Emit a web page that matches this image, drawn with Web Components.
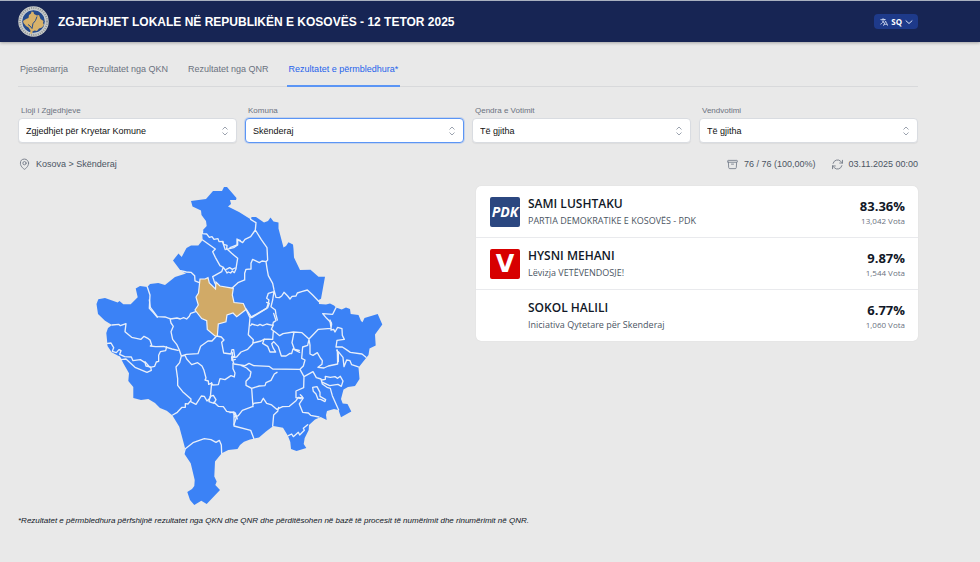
<!DOCTYPE html>
<html lang="sq">
<head>
<meta charset="utf-8">
<meta name="viewport" content="width=device-width, initial-scale=1">
<title>Zgjedhjet Lokale</title>
<style>
  body { margin: 0; background: #e9e9e9; font-family: "Liberation Sans", Arial, sans-serif; font-size: 10px; color: #111827; }
</style>
</head>
<body>
<results-page></results-page>
<script>
const define = (name, html, setup) => {
  const template = document.createElement('template');
  template.innerHTML = `<style>*{box-sizing:border-box}svg{display:block;flex:none}</style>` + html;
  customElements.define(name, class extends HTMLElement {
    constructor() {
      super();
      this.attachShadow({ mode: 'open' }).append(template.content.cloneNode(true));
    }
    connectedCallback() { if (setup) setup(this, this.shadowRoot); }
  });
};

define('state-seal', `
<style>:host{display:block;width:31px;height:31px}svg{width:100%;height:100%}</style>
<svg viewBox="0 0 62 62" aria-hidden="true">
  <circle cx="31" cy="31" r="30.500" fill="#c9cbc9"/>
  <circle cx="31" cy="31" r="27" fill="none" stroke="#8f9496" stroke-width="4" stroke-dasharray="2 2.500"/>
  <circle cx="31" cy="31" r="23.500" fill="#244a8c" stroke="#e3e4e0" stroke-width="1.500"/>
  <path d="M27 11l4 1 1 4 6 3 4-1 3 8 6 4-1 4 2 4-4 5-6 2-4 5-5-1-4 2-1 5-4-1 1-6-4-6-5-3-5-6-1-4 6-4 5-2 1-6 4-3z" fill="#d8b26a"/>
  <path d="M38 21l-3 8-5 6-2 10-4-5-4-3" fill="none" stroke="#244a8c" stroke-width="2"/>
</svg>`);

define('language-menu', `
<style>
:host{display:block}
button{display:flex;align-items:center;gap:3px;height:15px;padding:0 5px 0 6px;border:0;border-radius:4px;background:#1e3a8a;color:#fff;font:bold 8px/15px "Open Sans","Noto Sans",sans-serif}
svg{fill:none;stroke:#dbe4f5;stroke-linecap:round;stroke-linejoin:round}
</style>
<button type="button" aria-haspopup="menu">
<svg width="8" height="8" viewBox="1 2 21 20" stroke-width="2"><path d="m10.500 21 5.250-11.250L21 21m-9-3h7.500M3 5.621a48.474 48.474 0 0 1 6-.371m0 0c1.120 0 2.233.038 3.334.114M9 5.250V3m3.334 2.364C11.176 10.658 7.690 15.080 3 17.502m9.334-12.138c.896.061 1.785.147 2.666.257m-4.589 8.495a18.023 18.023 0 0 1-3.827-5.802"/></svg>
<span>SQ</span>
<svg width="8" height="8" viewBox="0 0 8 8" stroke-width="1"><path d="M1 2.800 4 5.500l3-2.700"/></svg>
</button>`);

define('site-header', `
<style>
:host{display:flex;align-items:center;gap:9px;height:42px;padding:0 62px 0 18px;background:#172554;border-top:1px solid #a9b1c0;box-shadow:0 1px 3px #0000004d}
h1{margin:0;flex:1;font-size:12px;line-height:18px;font-weight:700;color:#fff}
</style>
<state-seal></state-seal><h1><slot></slot></h1><language-menu></language-menu>`);

define('tab-link', `
<style>
:host{display:block}
a{display:block;padding:0 2px 9px;border-bottom:2px solid transparent;color:#6b7280;text-decoration:none;font-size:9px;line-height:14px;white-space:nowrap}
:host([active]) a{color:#2563eb;border-color:#5b95f5}
</style><a href="#"><slot></slot></a>`);

define('tab-bar', `
<style>:host{display:block;border-bottom:1px solid #d8d9db}nav{display:flex;gap:16px;margin-bottom:-1px}</style>
<nav><slot></slot></nav>`);

define('filter-select', `
<style>
:host{display:block;min-width:0}
label{display:block;padding:0 3px;font-size:8px;line-height:12px;color:#6b7280}
.box{display:grid;align-items:center;margin-top:1px}
select{grid-area:1/1;appearance:none;width:100%;height:25px;padding:0 7px;border:1px solid #d9dce1;border-radius:4px;background:#fff;color:#111;font:9px "Liberation Sans",Arial,sans-serif;box-shadow:0 1px 1px #0000000d;outline:0}
:host([active]) select{border-color:#5b95f5;box-shadow:0 0 0 1px #5b95f540}
svg{grid-area:1/1;justify-self:end;margin-right:8px;pointer-events:none;fill:none;stroke:#9ca3af;stroke-width:1}
</style>
<label for="field"></label>
<div class="box"><select id="field"><option></option></select>
<svg width="8" height="10" viewBox="0 0 8 10"><path d="M1.500 3.500 4 1l2.500 2.500M1.500 6.500 4 9l2.500-2.500"/></svg></div>`,
(el, root) => {
  root.querySelector('label').textContent = el.getAttribute('label');
  root.querySelector('option').textContent = el.getAttribute('value');
});

define('status-bar', `
<style>
:host{display:flex;align-items:center;gap:16px;font-size:9px;line-height:14px;color:#4b5563}
span{display:flex;align-items:center;gap:6px}
.place{margin-right:auto;padding-left:1px}
svg{fill:none;stroke:#7b828e;stroke-width:1.800;stroke-linecap:round;stroke-linejoin:round}
</style>
<span class="place"><svg width="11" height="12" viewBox="3 1 18 22"><path d="M15 10.500a3 3 0 1 1-6 0 3 3 0 0 1 6 0Z"/><path d="M19.500 10.500c0 7.142-7.500 11.250-7.500 11.250S4.500 17.642 4.500 10.500a7.500 7.500 0 1 1 15 0Z"/></svg>Kosova &gt; Skënderaj</span>
<span><svg width="11" height="11" viewBox="1 2 22 20"><path d="m20.250 7.500-.625 10.632a2.250 2.250 0 0 1-2.247 2.118H6.622a2.250 2.250 0 0 1-2.247-2.118L3.750 7.500M10 11.250h4M3.375 7.500h17.250c.621 0 1.125-.504 1.125-1.125v-1.500c0-.621-.504-1.125-1.125-1.125H3.375c-.621 0-1.125.504-1.125 1.125v1.500c0 .621.504 1.125 1.125 1.125Z"/></svg>76 / 76 (100,00%)</span>
<span><svg width="11" height="11" viewBox="2 2 20 20"><path d="M16.023 9.348h4.992v-.001M2.985 19.644v-4.992m0 0h4.992m-4.993 0 3.181 3.183a8.250 8.250 0 0 0 13.803-3.700M4.031 9.865a8.250 8.250 0 0 1 13.803-3.700l3.181 3.182m0-4.991v4.990"/></svg>03.11.2025 00:00</span>`);

define('candidate-row', `
<style>
:host{display:flex;align-items:center;gap:8px;height:52px;padding:0 13px 0 14px;border-bottom:1px solid #e9eaed;font-family:"Open Sans","Noto Sans",sans-serif}
:host(:last-child){height:51px;border-bottom:0}
.logo{width:30px;height:30px}
.who{flex:1}
.score{padding-top:2px;text-align:right}
h2,p,strong{display:block;margin:0}
h2{font-size:12px;line-height:18px;font-weight:600;color:#111827}
strong{font-size:13px;line-height:16px;font-weight:700;color:#111827}
.party{font-size:9px;line-height:16px;font-weight:500;color:#4b5563}
.votes{font-size:8px;line-height:13px;color:#6b7280}
</style>
<div class="logo"><slot name="logo"></slot></div>
<div class="who"><h2></h2><p class="party"></p></div>
<div class="score"><strong></strong><p class="votes"></p></div>`,
(el, root) => {
  for (const [sel, key] of [['h2', 'name'], ['.party', 'party'], ['strong', 'share'], ['.votes', 'votes']])
    root.querySelector(sel).textContent = el.getAttribute(key);
});

define('party-logo', `
<style>
:host{display:grid;place-items:center;height:30px;border-radius:2px;background:var(--logo);color:#fff;font:italic 700 14px/30px "Open Sans",sans-serif}
:host([mark]){font:normal 700 24px/30px "DejaVu Sans",sans-serif}
</style><span><slot></slot></span>`);

define('results-list', `
<style>:host{display:block;background:#fff;border-radius:5px;overflow:hidden;box-shadow:0 0 1px #0002}</style><slot></slot>`);

define('municipality-map', `
<style>:host{display:block}svg{width:100%;max-width:300px;height:auto}
.land{fill:#3b82f6}.chosen{fill:#d1aa67;stroke:#eef2f8;stroke-width:1.200}
.lines{fill:none;stroke:#e8effa;stroke-width:4;stroke-linejoin:round;stroke-linecap:round}</style>
<svg viewBox="90 180 300 330" role="img" aria-label="Harta e komunave">
<path class="land" d="M191 201L206 199 213 191 222 191 224 187 227 187 236.500 198 236 200 230 200 231 204 228 206.500 239 212 251 219.500 251.500 217 256 217 264 222.500 268 221 270.500 217.500 273.500 221.500 278.500 222.500 278.500 228.500 283.500 247.500 286 246 288.500 242.300 293 244.500 293.500 249 294 257.500 300 270 310.500 269.700 318.500 276.700 325 276.700 321 298.700 318.700 300 319 304 326 304.500 330 303.500 334 305.500 336 307.500 341.700 309.500 346 307.500 350 309 350.700 314 358.500 315 361 321 362.500 322.300 364.500 318 377.700 314 382.300 324.500 375 334.500 375.700 345.500 369.500 348.500 368.500 355 358.500 367.500 359.500 379 355 386 348 387 343.500 389.500 341 399 342.700 403.500 347.500 404 351.300 411.500 341 417.300 338.500 410 334 409 327 411 326 415 326.700 420 320.700 417 315 419.500 309 425 308.700 430 304.700 438 303.700 444 306.300 448 301.500 449.500 296.500 451 291 449 290.300 442 288 436 283 427.700 273.300 426 266 431.500 259 437.500 250 439.500 244 441.700 240 445 237.500 449 228.300 450 221.700 453.300 215 461.500 214.300 476.500 216.700 481.500 215.300 485 220 490 206.700 504 201.300 500.700 194.300 505 190 500 187.300 492 192 489 194.300 486 194.700 480 190.700 463.300 184 453.300 185 448 179.300 426.700 172.300 415.300 166.700 410.700 160 408 155 403 148.300 399 141 400 133.300 398 133.300 387 128.300 381 129 373.300 123.300 363.300 120 356.700 111.700 352.300 107.500 346 107 340 106.300 333 108 328 112 325 105 320.700 98 314 96.500 304 98.300 299.300 105 298 117.700 302.500 119.500 301 123.300 304.300 130.700 304.300 137.700 297.300 135.700 288.500 140 286 147.300 287 150 284 158.300 283 165 285 175 277 186 273.500 180.500 270.500 173 260.500 178.500 253.500 181.700 257 186.500 248 191 245.500 198.300 245.500 202.700 240 202 231 206.700 226 206 221 201.500 215 201 210.500 192.500 206.500Z"/>
<g class="lines">
<g transform="translate(90 180) scale(.3333)"><path d="M338 152l-1 9 13 1 8 10 8-2 6 8 12-2 3 9 12-1 2 9 10 3-1 12 21-5 12-8 0-15 8 1M338 180l38 27-8 8 8 17 14 25 10 5-5 13-27 15 5 15 10 23M412 208l13 12 18 15-3 18-2 14-5 11-6-5-5 6-7-3-4 3-5-9-6-8M409 268l10-5 8 5 8-4M272 272l17 4 14 1 11 10 1 16 13 5M172 321l8 24-2 40 12 13 12 14M398 187l8 22"/></g>
<g transform="translate(230 180) scale(.3333)"><path d="M62 118l16 10-2 22-14 20-17 8-7 10-11-7-6-4 0 18-21 8M76 150l18 29 17 24 2 37-5 5 3 20 4 22 13 23 4 20 6 22M108 245l-12-2-8 5-20-10-5 12 0 17-15 1-4 12 0 20-20 8-20 18M138 352l10 1 7-5 7-11 11 11 7 9 6-8 12-1 4-9 13-4 17-5 16 15 18 19M132 335l-17 5-5 15 7 5-2 10-5 15-45 28-17-26M132 335l-4 25-5 20 13 10 2 14 4 16M318 383l-10 20-30-2 12 14 14 14"/></g>
<g transform="translate(90 300) scale(.3333)"><path d="M178 0l3 22 21 28 23 1 16 6 20-3 10 3 10-4 9 4 8-8 4-9 15-5M240 55l3 14 7 10-7 16 5 23 12 15 8 17 6 18M66 75l20-2 5 4 17-6-3 24 20 17 28 6 9-9 13 7 5 4 5 15-4 3 16 2 24-1 25 8 18 4M230 140l-3 12-16 3-5 11 0 18-7 2-5 13-14 3-15-17M52 130l11-1 8 14-4 11 12 4 8-9 6 3-4 11 15 7 20 1 5 11 22-3 14 9 3 10 14 3 2 10-13 6-36-15-27-25-14 2-7-8M275 168l14-5 35-2 8-22 22-16 12 0 14-15M275 168l10-2 5 11 15 17 18-6 13 10 6 13 6 23-3 6 10 3 1 10 9-4 3 6 17-1 5-18 15 3 18-12 10 4 2-12-6-13 0-16M274 168l-5 20-11 13 5 35 0 20 15 19 25 22-1 8 16 8 16-25 9 1 8 14 10-10 4-45M303 301l-9 11-8-1 0 11-10 0-14 15-14 8M380 108l14 3 8 9-7 7 6 32 22 3 3-13 5 0 3 20-9 2 1 10 10-3M360 290l10-4 8 13-6 11-15-5zM372 307l13 12 15 1 10 14 26 5 6 18"/></g>
<g transform="translate(230 300) scale(.3333)"><path d="M48 28l12 25 53-30 5-13-8-3M60 53l-2 22-3 29 15 15-2 13-15 16-20 8-13 15-14 2 2-15M62 77l3-5 18 5 7-4 8 4 12-5 18 4 2-9 8-5-7-22M300 62l4 28M130 75l-6 13 15 11 10 8 10-6 31-5 26 2 21 19 28-29 38-3 2-13-5-12M130 93l-2 25-25-1-10 6-24 6M103 117l-5 13 15 9 7 17 17 0-8-13-4-12 6-6 14 15 9 28 14 0 12-8 5 1 4-14 19 4M192 97l-6 31 8 22 15 7M237 118l-4 18-15 5-3 34 10 5-5 18-10 10-82-1-11-8-46-2-14-7-12 7-33-5-5-14 4-9M237 118l3 17 0 27 9 4 13-8 9 16 6 8-1 11-12 9 18 2 13-6 28-6-1-42M303 90l8-2 4 8 8-14 13 4 1 20 6 12-22 3-3 20 19 0 12 8 12 8 35 5 12 10M325 185l0-23-5-12M325 155l14 17 3 28 8-20 10 2 5 12 20 7M30 195l20 9 13 12-3 15-12 13 0 12 17 9 23-7 17-1 3-9 15-7 10-19 8-5M65 265l4 55M12 336l-12 2M12 352l13-5 12-16 30-11 4-10 22-3 7-12 10 15 15 5 15 13 18-8 20-1 20-17 7-10 15 2-12 18 10 25 17 2 7 7 25 5M146 322l-3 12-12 11-3 33M12 336l0 42 50 13 10 26M210 208l12 22-1 33-23 10 0 20 14 3 5-6-6-6M222 230l27-15 10 18 14 4 4 15 14 10 10 3 6 22 19 43M275 240l11-2 0-9 15 3 14-2 8 5 8-6 8 14-5 16-10-6-25 4-21-10M248 262l13-2 9 17 0 12 17 10-2 6-13-7-8 0-6-16-8-8zM175 407l10-5 5 8 15-13 4 8 14-14-3-6 13-11"/></g>
<g transform="translate(160 390) scale(.3333)"><path d="M72 190l4-14 23-18 34-12 20 3 15 8 10-6 6 14 1 25M222 72l8 8-8 24"/></g>
</g>
<path class="chosen" d="M200 279L205 279 208 277.700 209.300 283 215.500 289 216 282 220 286 233.300 288.300 232.300 295 234 302.500 243.300 303.500 246 309.500 236.700 316.700 233 313 227 315 226 321.700 218.300 324 217.300 336 215 336 207.300 329.500 206.700 320.700 201.700 318.500 195 310 198.300 305 196 297 198.500 293Z"/>
</svg>`);

define('results-page', `
<style>
:host{display:block}
main{display:flex;flex-direction:column;padding:20px 62px 20px 18px}
.filters{display:grid;grid-template-columns:repeat(4,1fr);gap:8px;margin:18px 0 14px}
.content{display:grid;grid-template-columns:1fr 1fr;gap:16px;align-items:start;margin-top:9px}
municipality-map{padding-left:72px}
results-list{margin-top:6px}
footer{margin-top:5px;font-size:8px;line-height:12px;font-style:italic;color:#111827}
</style>
<site-header>ZGJEDHJET LOKALE NË REPUBLIKËN E KOSOVËS - 12 TETOR 2025</site-header>
<main>
<tab-bar><tab-link>Pjesëmarrja</tab-link><tab-link>Rezultatet nga QKN</tab-link><tab-link>Rezultatet nga QNR</tab-link><tab-link active>Rezultatet e përmbledhura*</tab-link></tab-bar>
<div class="filters">
<filter-select label="Lloji i Zgjedhjeve" value="Zgjedhjet për Kryetar Komune"></filter-select>
<filter-select active label="Komuna" value="Skënderaj"></filter-select>
<filter-select label="Qendra e Votimit" value="Të gjitha"></filter-select>
<filter-select label="Vendvotimi" value="Të gjitha"></filter-select>
</div>
<status-bar></status-bar>
<div class="content">
<municipality-map></municipality-map>
<results-list>
<candidate-row name="SAMI LUSHTAKU" party="PARTIA DEMOKRATIKE E KOSOVËS - PDK" share="83.36%" votes="13,042 Vota"><party-logo slot="logo" style="--logo:#2b4780">PDK</party-logo></candidate-row>
<candidate-row name="HYSNI MEHANI" party="Lëvizja VETËVENDOSJE!" share="9.87%" votes="1,544 Vota"><party-logo slot="logo" mark style="--logo:#d70000">V</party-logo></candidate-row>
<candidate-row name="SOKOL HALILI" party="Iniciativa Qytetare për Skenderaj" share="6.77%" votes="1,060 Vota"></candidate-row>
</results-list>
</div>
<footer>*Rezultatet e përmbledhura përfshijnë rezultatet nga QKN dhe QNR dhe përditësohen në bazë të procesit të numërimit dhe rinumërimit në QNR.</footer>
</main>`);
</script>
</body>
</html>
